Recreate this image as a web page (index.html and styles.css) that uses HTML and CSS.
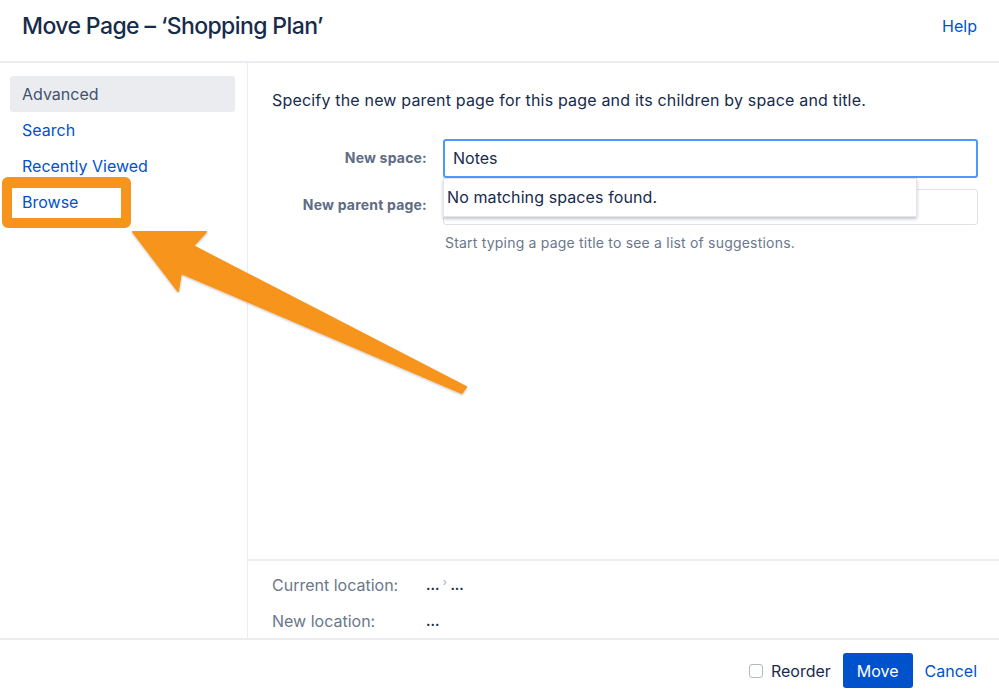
FILE: index.html
```html
<!DOCTYPE html>
<html lang="en">
<head>
<meta charset="utf-8">
<title>Move Page</title>
<link rel="stylesheet" href="styles.css">
</head>
<body>
<div class="dialog">
  <header class="dialog-header">
    <h1 class="dialog-title">Move Page – ‘Shopping Plan’</h1>
    <a class="help-link" href="#">Help</a>
  </header>
  <div class="dialog-body">
    <nav class="sidebar">
      <a class="nav-item nav-item-active" href="#">Advanced</a>
      <a class="nav-item" href="#">Search</a>
      <a class="nav-item" href="#">Recently Viewed</a>
      <a class="nav-item" href="#">Browse</a>
    </nav>
    <main class="main">
      <div class="panel">
        <p class="intro">Specify the new parent page for this page and its children by space and title.</p>
        <div class="form-grid">
          <label class="field-label">New space:</label>
          <div class="field">
            <div class="input input-focus">Notes</div>
            <div class="dropdown">No matching spaces found.</div>
          </div>
          <label class="field-label field-label-2">New parent page:</label>
          <div class="field">
            <div class="input"></div>
            <div class="hint">Start typing a page title to see a list of suggestions.</div>
          </div>
        </div>
      </div>
      <div class="locations">
        <div class="loc-row">
          <span class="loc-label">Current location:</span>
          <span class="loc-value">... <span class="crumb-sep">›</span> ...</span>
        </div>
        <div class="loc-row">
          <span class="loc-label">New location:</span>
          <span class="loc-value">...</span>
        </div>
      </div>
    </main>
  </div>
  <footer class="dialog-footer">
    <label class="reorder"><span class="checkbox"></span>Reorder</label>
    <button class="btn-primary">Move</button>
    <a class="cancel-link" href="#">Cancel</a>
  </footer>
</div>
<div class="annotation">
  <div class="highlight-box"></div>
  <svg class="arrow" width="999" height="692" viewBox="0 0 999 692">
    <defs>
      <filter id="sh" x="-10%" y="-10%" width="120%" height="120%">
        <feDropShadow dx="0" dy="1" stdDeviation="1" flood-color="#000" flood-opacity="0.25"/>
      </filter>
    </defs>
    <polygon filter="url(#sh)" fill="#F7941D" stroke="#F7941D" stroke-width="2" stroke-linejoin="round"
      points="133,232 206,232 193,246 466,387 462,393 181,273 178,291"/>
  </svg>
</div>
</body>
</html>
```
FILE: styles.css
```css
* { box-sizing: border-box; }
html, body { margin: 0; padding: 0; }
body {
  width: 999px;
  height: 692px;
  overflow: hidden;
  background: #fff;
  font-family: "Inter", "Liberation Sans", sans-serif;
  color: #172B4D;
  position: relative;
}
a { text-decoration: none; }

.dialog {
  display: flex;
  flex-direction: column;
  height: 692px;
}

.dialog-header {
  height: 63px;
  display: flex;
  align-items: center;
  justify-content: space-between;
  padding: 0 22px 10px 22px;
  border-bottom: 2px solid #EBECF0;
}
.dialog-title {
  margin: 0;
  font-size: 23px;
  font-weight: 500;
  letter-spacing: -0.6px;
  color: #172B4D;
}
.help-link {
  font-size: 16px;
  color: #0052CC;
}

.dialog-body {
  flex: 1;
  display: flex;
  min-height: 0;
}

.sidebar {
  width: 248px;
  flex: none;
  border-right: 1px solid #EBECF0;
  padding: 13px 12px 0 10px;
  display: flex;
  flex-direction: column;
}
.nav-item {
  height: 36px;
  line-height: 36px;
  padding: 0 12px;
  font-size: 16px;
  color: #0052CC;
  border-radius: 3px;
}
.nav-item-active {
  background: #EBECF0;
  color: #42526E;
}

.main {
  flex: 1;
  display: flex;
  flex-direction: column;
  min-width: 0;
}
.panel {
  flex: 1;
  padding: 25px 21px 0 24px;
}
.intro {
  margin: 0 0 27px 0;
  font-size: 16px;
  line-height: 24px;
  letter-spacing: 0.18px;
  color: #172B4D;
}
.form-grid {
  display: grid;
  grid-template-columns: 155px 1fr;
  column-gap: 16px;
  row-gap: 11px;
  align-items: start;
}
.field-label {
  font-size: 14px;
  font-weight: 700;
  color: #5E6C84;
  text-align: right;
  line-height: 20px;
  padding-top: 9px;
  letter-spacing: 0.2px;
}
.field-label-2 { padding-top: 6px; }
.field { position: relative; }
.input {
  height: 36px;
  border: 1px solid #DFE1E6;
  border-radius: 3px;
  background: #fff;
  font-size: 16px;
  line-height: 34px;
  padding: 0 9px;
  color: #172B4D;
}
.input-focus {
  height: 39px;
  border: 2px solid #4C9AFF;
  line-height: 35px;
  padding: 0 8px;
}
.dropdown {
  position: absolute;
  top: 39px;
  left: 0;
  width: 474px;
  height: 39px;
  background: #fff;
  border: 1px solid #E4E5E8;
  box-shadow: 0 2px 3px rgba(9, 30, 66, 0.25);
  font-size: 16px;
  line-height: 37px;
  padding-left: 3px;
  letter-spacing: 0.1px;
  color: #172B4D;
  z-index: 2;
}
.hint {
  margin-top: 8px;
  padding-left: 2px;
  font-size: 14px;
  line-height: 20px;
  letter-spacing: 0.2px;
  color: #6B778C;
}

.locations {
  border-top: 2px solid #EBECF0;
  padding: 12px 24px 5px 24px;
  display: flex;
  flex-direction: column;
  gap: 11px;
}
.loc-row {
  display: flex;
  font-size: 16px;
  line-height: 24px;
}
.loc-label {
  width: 154px;
  color: #6B778C;
}
.loc-value {
  color: #172B4D;
  font-size: 14px;
  font-weight: 600;
}
.crumb-sep {
  color: #A5ADBA;
  font-size: 11px;
  font-weight: 400;
  position: relative;
  top: -4px;
}

.dialog-footer {
  height: 54px;
  border-top: 2px solid #EBECF0;
  display: flex;
  align-items: center;
  justify-content: flex-end;
  padding: 9px 22px 0 0;
  gap: 12px;
}
.reorder {
  display: flex;
  align-items: center;
  font-size: 16px;
  color: #172B4D;
}
.checkbox {
  width: 14px;
  height: 14px;
  border: 1px solid #B3B9C4;
  border-radius: 3px;
  margin-right: 8px;
  background: #fff;
}
.btn-primary {
  height: 35px;
  padding: 0 14px;
  background: #0052CC;
  color: #fff;
  border: none;
  border-radius: 3px;
  font-family: inherit;
  font-size: 16px;
}
.cancel-link {
  font-size: 16px;
  color: #0052CC;
}

.annotation {
  position: absolute;
  left: 0;
  top: 0;
  width: 999px;
  height: 692px;
  pointer-events: none;
}
.highlight-box {
  position: absolute;
  left: 2px;
  top: 177px;
  width: 129px;
  height: 51px;
  border: 10px solid #F7941D;
  border-top-width: 11px;
  border-radius: 6px;
}
.arrow {
  position: absolute;
  left: 0;
  top: 0;
}
```
